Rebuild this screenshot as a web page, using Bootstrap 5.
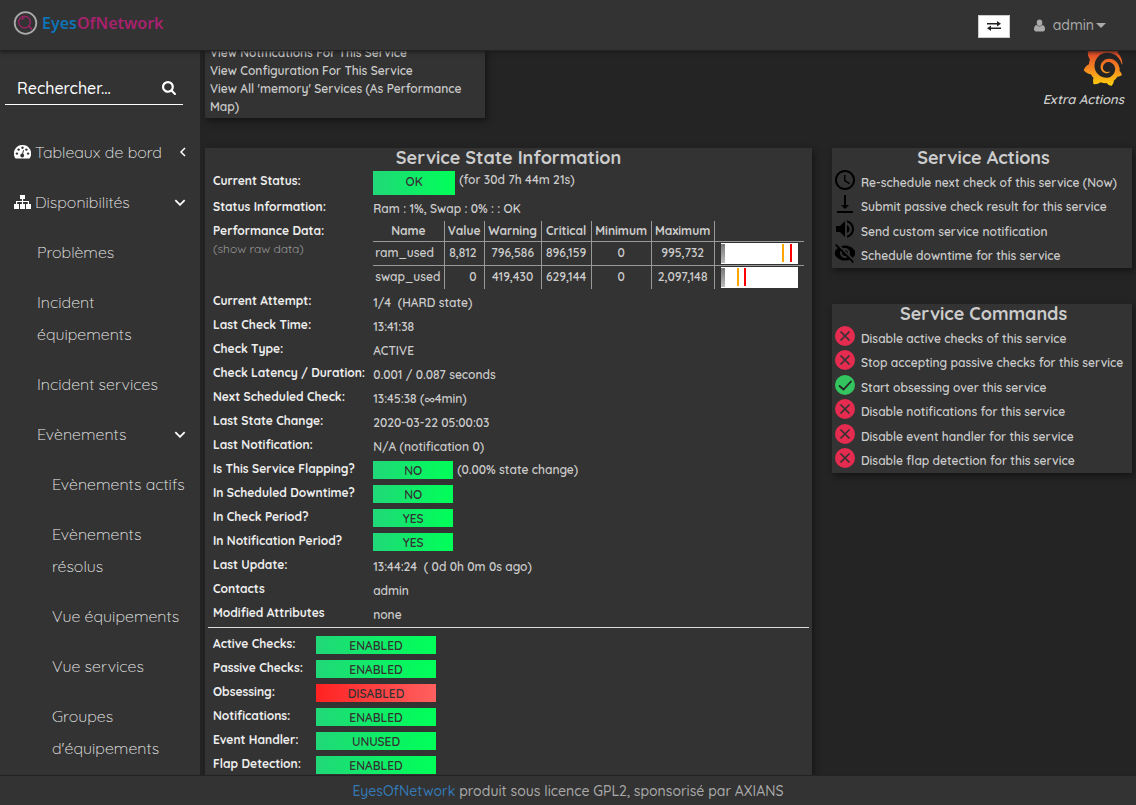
<!DOCTYPE html>
<html lang="fr">
<head>
<meta charset="utf-8">
<meta name="viewport" content="width=device-width, initial-scale=1">
<title>EyesOfNetwork</title>
<link href="https://cdn.jsdelivr.net/npm/bootstrap@5.3.0/dist/css/bootstrap.min.css" rel="stylesheet">
<style>
  body { background: #242424; color: #ccc; font-family: Quicksand, Lato, sans-serif; font-size: 12px; font-weight: 600; line-height: 18px; }
  a { color: inherit; text-decoration: none; }
  .topbar { height: 51px; background: #333; border-bottom: 1px solid #222; box-shadow: 0 1px 4px #1a1a1a; z-index: 2; padding: 0 30px 0 13px; }
  .brand { color: #a8216f; font: 600 16px "Noto Sans", sans-serif; }
  .brand b { color: #0d74b8; font-weight: 600; }
  .swap-btn { width: 32px; height: 23px; margin-top: 2px; background: #fff; border: 1px solid #ccc; color: #222; }
  .user-btn { color: #aaa; font-size: 14px; font-weight: 500; line-height: 20px; }
  .user-btn::after { margin-left: 2px; border-width: 5px 5px 0; }
  .sidebar { width: 200px; background: #333; font-size: 16px; line-height: 32px; color: #eee; font-weight: 300; }
  .search { margin: 20px 17px 18px 5px; height: 34px; border-bottom: 1px solid #fff; padding: 0 7px 0 12px; }
  .search input { width: 100%; min-width: 0; color: #fff; font-weight: 500; }
  .search input::placeholder { color: #fff; opacity: 1; }
  .menu a { display: flex; align-items: center; padding: 9px 14px; color: #eee; }
  .menu .sub a { padding-left: 37px; }
  .menu .sub .sub a { padding-left: 52px; }
  .content { padding: 0 4px 0 5px; }
  /* the page is scrolled a little under the top bar */
  .scrolled { margin-top: -7px; }
  .panel { background: #333; box-shadow: 2px 3px 6px #151515; }
  .links-panel { width: 280px; padding: 0 5px 2px; }
  .columns { margin-top: 30px; }
  .side-col { width: 300px; }
  h2 { margin: 0; padding-bottom: 1px; font-size: 18px; line-height: 20px; font-weight: 700; text-align: center; }
  .facts th { vertical-align: top; padding: 3px 8px 0; height: 24px; color: #eee; font-weight: 700; white-space: nowrap; }
  .facts td { vertical-align: top; padding: 5px 0 0; }
  .facts .first th { height: 26px; }
  .facts .first td { padding-top: 2px; }
  .facts .tagged td { padding-top: 4px; }
  .facts td.flush { padding-top: 2px; }
  .c-wide { width: 168px; }
  .c-flags { width: 111px; }
  .tag { width: 80px; color: #333; line-height: 19px; height: 18px; text-align: center; background: linear-gradient(90deg, #20d878, #00ff58); }
  .tag-lg { width: 82px; height: 24px; line-height: 22px; }
  .tag-flag { width: 120px; }
  .tag-off { background: linear-gradient(90deg, #ff2222, #ff6060); }
  .rule { margin: 2px 3px 4px; border-top: 1px solid #ddd; opacity: 1; }
  .raw { color: #999; font-weight: 400; }
  .perf { border-collapse: collapse; table-layout: fixed; width: 431px; }
  .facts .perf th, .facts .perf td { padding: 0 2px; vertical-align: middle; text-align: center; border: 1px solid #999; }
  .facts .perf tr > :first-child { border-left: 0; }
  .facts .perf tr > :last-child { border-right: 0; }
  .facts .perf tr:first-child > * { border-top: 0; }
  .facts .perf tr:last-child > * { border-bottom: 0; }
  .facts .perf th { height: 20px; color: #ccc; padding: 0; }
  .facts .perf td { height: 24px; }
  .facts .perf .name { text-align: left; }
  .facts .perf .val { text-align: right; padding-right: 7px; }
  .perf svg { display: block; margin-left: 4px; }
  .acts { padding: 0 0 1px 3px; }
  .acts a { display: flex; height: 24px; gap: 6px; align-items: flex-start; white-space: nowrap; }
  .acts a:nth-of-type(even) { height: 25px; }
  .acts span { padding-top: 5px; }
  .cmds { margin-top: 36px; }
  .extra { padding-right: 8px; font-size: 13px; font-style: italic; }
  .footer { height: 30px; background: #333; border-top: 1px solid #222; font-size: 14px; font-weight: 500; color: #aaa; z-index: 2; }
  .footer a { color: #337ab7; }
</style>
</head>
<body class="vh-100 overflow-hidden d-flex flex-column">
<svg width="0" height="0" class="position-absolute">
  <defs>
    <symbol id="down" viewBox="0 0 10 6"><path d="M1 1l4 4 4-4" fill="none" stroke="#fff" stroke-width="1.5"/></symbol>
    <symbol id="no" viewBox="0 0 20 20"><circle cx="10" cy="10" r="10" fill="#e52b50"/><path d="M5.500 5.500l9 9M14.500 5.500l-9 9" stroke="#333" stroke-width="1.700"/></symbol>
    <symbol id="yes" viewBox="0 0 20 20"><circle cx="10" cy="10" r="10" fill="#34c45f"/><path d="M4 10.500l4.500 4L16.500 6" fill="none" stroke="#222" stroke-width="1.800"/></symbol>
    <linearGradient id="sun" x1="0" y1="1" x2="0" y2="0"><stop offset="0" stop-color="#fdd20a"/><stop offset=".3" stop-color="#f99b1c"/><stop offset=".75" stop-color="#e5502a"/><stop offset="1" stop-color="#e5502a"/></linearGradient>
    <linearGradient id="steel" x1="0" y1="0" x2="0" y2="1"><stop offset="0" stop-color="#777"/><stop offset="1" stop-color="#bbb"/></linearGradient>
  </defs>
</svg>

<header class="topbar d-flex align-items-center flex-shrink-0 position-relative">
  <a href="#" class="brand d-flex align-items-center gap-1 me-auto pb-1">
    <svg width="25" height="24" viewBox="0 0 24 24" fill="none"><circle cx="12" cy="12" r="10.800" stroke="#aaa" stroke-width="1.800"/><circle cx="11" cy="11" r="5.800" stroke="#a8216f" stroke-width="1.200"/><path d="M15.500 15l3 3.500M8 8.500a4 4 0 0 1 3-1.300" stroke="#a8216f" stroke-width="1.500"/></svg>
    <span><b>Eyes</b>OfNetwork</span>
  </a>
  <button type="button" class="swap-btn p-0 d-flex align-items-center justify-content-center" aria-label="Basculer"><svg width="14" height="10" viewBox="0 0 14 10" fill="currentColor"><path d="M0 2h10V0l4 2.800-4 2.700V3.500H0zM14 6.500H4v-2L0 7.300 4 10V8h10z"/></svg></button>
  <button type="button" class="user-btn dropdown-toggle border-0 bg-transparent p-0 ms-4 d-flex align-items-center"><svg width="11" height="13" viewBox="0 0 12 13" fill="currentColor" class="me-2"><ellipse cx="6" cy="3.500" rx="3" ry="3.500"/><path d="M2.800 6C.8 6.300 0 8.500 0 10.700 0 12.200 1 13 2 13h8c1 0 2-.8 2-2.300C12 8.500 11.200 6.300 9.200 6 7.500 8 4.500 8 2.800 6z"/></svg>admin</button>
</header>

<div class="d-flex flex-grow-1 overflow-hidden">
  <aside class="sidebar flex-shrink-0">
    <form class="search d-flex align-items-center">
      <input type="text" class="bg-transparent border-0 p-0" placeholder="Rechercher..." aria-label="Rechercher">
      <button type="button" class="bg-transparent border-0 p-0 d-flex" aria-label="Lancer la recherche"><svg width="14" height="14" viewBox="64 128 1664 1664" fill="#fff"><path d="M1216 832q0-185-131.500-316.500t-316.500-131.500-316.500 131.500-131.500 316.500 131.500 316.500 316.500 131.500 316.500-131.500 131.500-316.500zm512 832q0 52-38 90t-90 38q-54 0-90-38l-343-342q-179 124-399 124-143 0-273.500-55.500t-225-150-150-225-55.500-273.500 55.500-273.500 150-225 225-150 273.500-55.500 273.500 55.500 225 150 150 225 55.500 273.500q0 220-124 399l343 343q37 37 37 90z"/></svg></button>
    </form>
    <nav class="menu pt-1">
      <a href="#"><svg class="me-1" width="17" height="14" viewBox="0 0 17 14"><path d="M8.500 0A8.500 8.500 0 0 0 1.200 13q.3.500.8.500h13q.5 0 .8-.5A8.500 8.500 0 0 0 8.500 0z" fill="#fff"/><g fill="#333"><circle cx="2.900" cy="8.600" r="1.200"/><circle cx="4.600" cy="4.600" r="1.200"/><circle cx="8.500" cy="2.800" r="1.200"/><circle cx="12.400" cy="4.600" r="1.200"/><circle cx="14.100" cy="8.600" r="1.200"/><circle cx="8.200" cy="10.500" r="1.900"/><path d="M7.800 10l1.300-5 .9.300-1.200 5z"/></g></svg><span class="me-auto">Tableaux de bord</span><svg width="7" height="10" viewBox="0 0 7 10"><path d="M6 1L2 5l4 4" fill="none" stroke="#fff" stroke-width="1.500"/></svg></a>
      <a href="#"><svg class="me-1" width="17" height="14" viewBox="0 0 17 14" fill="#fff"><path d="M6 0h5v4H9.100v2H15v3h2v5h-5V9h1.800V7H9.100v2H11v5H6V9h1.900V7H3.200v2H5v5H0V9h2V6h5.900V4H6z"/></svg><span class="me-auto">Disponibilités</span><svg width="12" height="7"><use href="#down"/></svg></a>
      <div class="sub">
        <a href="#">Problèmes</a>
        <a href="#">Incident<br>équipements</a>
        <a href="#">Incident services</a>
        <a href="#"><span class="me-auto">Evènements</span><svg width="12" height="7"><use href="#down"/></svg></a>
        <div class="sub">
          <a href="#">Evènements actifs</a>
          <a href="#">Evènements<br>résolus</a>
          <a href="#">Vue équipements</a>
          <a href="#">Vue services</a>
          <a href="#">Groupes<br>d'équipements</a>
        </div>
      </div>
    </nav>
  </aside>

  <main class="content flex-grow-1 overflow-hidden">
    <div class="scrolled d-flex justify-content-between">
      <div class="panel links-panel">
        <a href="#" class="d-block">View Notifications For This Service</a>
        <a href="#" class="d-block">View Configuration For This Service</a>
        <a href="#" class="d-block">View All 'memory' Services (As Performance Map)</a>
      </div>
      <a href="#" class="extra d-flex flex-column align-items-end">
        <svg width="42" height="42" viewBox="0 0 24 24" class="mb-1"><path fill="url(#sun)" d="M23.020 10.590a8.578 8.578 0 0 0-.862-3.034 8.911 8.911 0 0 0-1.789-2.445c.337-1.342-.413-2.505-.413-2.505-1.292-.08-2.113.4-2.416.62-.052-.02-.102-.044-.154-.064-.22-.089-.446-.172-.677-.247-.231-.073-.47-.14-.711-.197a9.867 9.867 0 0 0-.875-.161C14.557.753 12.940 0 12.940 0c-1.804 1.145-2.147 2.744-2.147 2.744l-.018.093c-.098.029-.2.057-.298.088-.138.042-.275.094-.413.143-.138.055-.275.107-.41.166a8.869 8.869 0 0 0-1.557.87l-.063-.029c-2.497-.955-4.716.195-4.716.195-.203 2.658.996 4.330 1.235 4.636a11.608 11.608 0 0 0-.607 2.635C1.636 12.677.953 15.014.953 15.014c1.926 2.214 4.171 2.351 4.171 2.351.003-.002.006-.002.006-.005.285.509.615.994.986 1.446.156.19.32.371.488.548-.704 2.009.099 3.680.099 3.680 2.144.08 3.553-.937 3.849-1.173a9.784 9.784 0 0 0 3.164.501h.08l.055-.003.107-.002.103-.005.003.002c1.010 1.440 2.788 1.646 2.788 1.646 1.264-1.332 1.337-2.653 1.337-2.940v-.058c0-.02-.003-.039-.003-.06.265-.187.52-.387.758-.6a7.875 7.875 0 0 0 1.415-1.700c1.430.083 2.437-.885 2.437-.885-.236-1.490-1.085-2.216-1.264-2.354l-.018-.013-.016-.013a.217.217 0 0 1-.031-.02c.008-.092.016-.18.02-.27.011-.162.016-.323.016-.48v-.253l-.005-.098-.008-.135a1.891 1.891 0 0 0-.01-.13c-.003-.042-.008-.083-.013-.125l-.016-.124-.018-.122a6.215 6.215 0 0 0-2.032-3.730 6.015 6.015 0 0 0-3.222-1.460 6.292 6.292 0 0 0-.85-.048l-.107.002h-.063l-.044.003-.104.008a4.777 4.777 0 0 0-3.335 1.695c-.332.4-.592.84-.768 1.297a4.594 4.594 0 0 0-.312 1.817l.003.091c.005.055.007.11.013.164a3.615 3.615 0 0 0 .698 1.820 3.530 3.530 0 0 0 1.827 1.282c.33.098.66.14.971.137.039 0 .078 0 .114-.002l.063-.003c.02 0 .041-.003.062-.003.034-.002.065-.007.099-.01.007 0 .018-.003.028-.003l.031-.005.06-.008a1.180 1.180 0 0 0 .112-.02c.036-.008.072-.013.109-.024a2.634 2.634 0 0 0 .914-.415c.028-.02.056-.041.085-.065a.248.248 0 0 0 .039-.35.244.244 0 0 0-.309-.06l-.078.042c-.09.044-.184.083-.283.116a2.476 2.476 0 0 1-.475.096c-.028.003-.054.006-.083.006l-.083.002c-.026 0-.054 0-.08-.002l-.102-.006h-.012l-.024.006c-.016-.003-.031-.003-.044-.006-.031-.002-.06-.007-.091-.01a2.590 2.590 0 0 1-.724-.213 2.557 2.557 0 0 1-.667-.438 2.520 2.520 0 0 1-.805-1.475 2.306 2.306 0 0 1-.029-.444l.006-.122v-.023l.002-.031c.003-.021.003-.04.005-.06a3.163 3.163 0 0 1 1.352-2.290 3.120 3.120 0 0 1 .937-.43 2.946 2.946 0 0 1 .776-.101h.06l.07.002.045.003h.026l.07.005a4.041 4.041 0 0 1 1.635.49 3.940 3.940 0 0 1 1.602 1.662 3.770 3.770 0 0 1 .397 1.414l.005.076.003.075c.002.026.002.05.002.075 0 .024.003.052 0 .07v.065l-.002.073-.008.174a6.195 6.195 0 0 1-.08.639 5.100 5.100 0 0 1-.267.927 5.310 5.310 0 0 1-.624 1.130 5.052 5.052 0 0 1-3.237 2.014 4.820 4.820 0 0 1-.649.066l-.039.003h-.287a6.607 6.607 0 0 1-1.716-.265 6.776 6.776 0 0 1-3.400-2.274 6.750 6.750 0 0 1-.746-1.150 6.616 6.616 0 0 1-.714-2.596l-.005-.083-.002-.02v-.056l-.003-.073v-.096l-.003-.104v-.07l.003-.163c.008-.22.026-.45.054-.678a8.707 8.707 0 0 1 .28-1.355c.128-.444.286-.872.473-1.277a7.040 7.040 0 0 1 1.456-2.100 5.925 5.925 0 0 1 .953-.763c.169-.111.343-.213.524-.306.089-.05.182-.091.273-.135.047-.02.093-.042.138-.062a7.177 7.177 0 0 1 .714-.267l.145-.045c.049-.015.098-.026.148-.041.098-.029.197-.052.296-.076.049-.013.1-.02.15-.033l.15-.032.151-.028.076-.013.075-.01.153-.024c.057-.01.114-.013.171-.023l.169-.021c.036-.003.073-.008.106-.01l.073-.008.036-.003.042-.002c.057-.003.114-.008.171-.01l.086-.006h.023l.037-.003.145-.007a7.999 7.999 0 0 1 1.708.125 7.917 7.917 0 0 1 2.048.68 8.253 8.253 0 0 1 1.672 1.090l.09.077.089.078c.06.052.114.107.171.159.057.052.112.106.166.16.052.055.107.107.159.164a8.671 8.671 0 0 1 1.410 1.978c.012.026.028.052.04.078l.04.078.075.156c.023.051.05.1.07.153l.065.15a8.848 8.848 0 0 1 .45 1.340.19.19 0 0 0 .201.142.186.186 0 0 0 .172-.184c.01-.246.002-.532-.024-.856z"/></svg>
        <span>Extra Actions</span>
      </a>
    </div>

    <div class="columns d-flex align-items-start">
      <section class="panel flex-grow-1 me-3">
        <h2>Service State Information</h2>
        <table class="facts w-100">
          <colgroup><col class="c-wide"><col></colgroup>
          <tr class="first"><th scope="row">Current Status:</th><td><div class="d-flex gap-1"><div class="tag tag-lg">OK</div><span>(for 30d 7h 44m 21s)</span></div></td></tr>
          <tr><th scope="row">Status Information:</th><td>Ram : 1%, Swap : 0% : : OK</td></tr>
          <tr><th scope="row">Performance Data:<br><a href="#" class="raw">(show raw data)</a></th><td class="flush">
            <table class="perf">
              <colgroup><col width="71"><col width="40"><col width="57"><col width="50"><col width="60"><col width="63"><col></colgroup>
              <tr><th>Name</th><th>Value</th><th>Warning</th><th>Critical</th><th>Minimum</th><th>Maximum</th><th></th></tr>
              <tr><td class="name">ram_used</td><td class="val">8,812</td><td>796,586</td><td>896,159</td><td>0</td><td>995,732</td><td><svg width="77" height="21"><path fill="#fff" d="M0 0h77v21H0z"/><path fill="url(#steel)" d="M0 1h4v19H0z"/><path fill="orange" d="M61 1h2v18h-2z"/><path fill="red" d="M69 1h2v18h-2z"/></svg></td></tr>
              <tr><td class="name">swap_used</td><td class="val">0</td><td>419,430</td><td>629,144</td><td>0</td><td>2,097,148</td><td><svg width="77" height="21"><path fill="#fff" d="M0 0h77v21H0z"/><path fill="url(#steel)" d="M0 1h4v19H0z"/><path fill="orange" d="M16 1h2v18h-2z"/><path fill="red" d="M23 1h2v18h-2z"/></svg></td></tr>
            </table></td></tr>
          <tr><th scope="row">Current Attempt:</th><td>1/4 &nbsp;(HARD state)</td></tr>
          <tr><th scope="row">Last Check Time:</th><td>13:41:38</td></tr>
          <tr><th scope="row">Check Type:</th><td>ACTIVE</td></tr>
          <tr><th scope="row">Check Latency / Duration:</th><td>0.001 / 0.087 seconds</td></tr>
          <tr><th scope="row">Next Scheduled Check:</th><td>13:45:38 (∞4min)</td></tr>
          <tr><th scope="row">Last State Change:</th><td>2020-03-22 05:00:03</td></tr>
          <tr><th scope="row">Last Notification:</th><td>N/A (notification 0)</td></tr>
          <tr class="tagged"><th scope="row">Is This Service Flapping?</th><td><div class="d-flex gap-1"><div class="tag">NO</div><span>(0.00% state change)</span></div></td></tr>
          <tr class="tagged"><th scope="row">In Scheduled Downtime?</th><td><div class="tag">NO</div></td></tr>
          <tr class="tagged"><th scope="row">In Check Period?</th><td><div class="tag">YES</div></td></tr>
          <tr class="tagged"><th scope="row">In Notification Period?</th><td><div class="tag">YES</div></td></tr>
          <tr><th scope="row">Last Update:</th><td>13:44:24 &nbsp;( 0d 0h 0m 0s ago)</td></tr>
          <tr><th scope="row">Contacts</th><td>admin</td></tr>
          <tr><th scope="row">Modified Attributes</th><td>none</td></tr>
        </table>
        <hr class="rule">
        <table class="facts w-100">
          <colgroup><col class="c-flags"><col></colgroup>
          <tr class="tagged"><th scope="row">Active Checks:</th><td><div class="tag tag-flag">ENABLED</div></td></tr>
          <tr class="tagged"><th scope="row">Passive Checks:</th><td><div class="tag tag-flag">ENABLED</div></td></tr>
          <tr class="tagged"><th scope="row">Obsessing:</th><td><div class="tag tag-flag tag-off">DISABLED</div></td></tr>
          <tr class="tagged"><th scope="row">Notifications:</th><td><div class="tag tag-flag">ENABLED</div></td></tr>
          <tr class="tagged"><th scope="row">Event Handler:</th><td><div class="tag tag-flag">UNUSED</div></td></tr>
          <tr class="tagged"><th scope="row">Flap Detection:</th><td><div class="tag tag-flag">ENABLED</div></td></tr>
        </table>
      </section>

      <div class="side-col flex-shrink-0 ms-1">
        <section class="panel acts">
          <h2>Service Actions</h2>
          <a href="#"><svg width="20" height="22" viewBox="2 1 20 22"><path d="M11.990 2C6.470 2 2 6.480 2 12s4.470 10 9.990 10C17.520 22 22 17.520 22 12S17.520 2 11.990 2zM12 20c-4.420 0-8-3.580-8-8s3.580-8 8-8 8 3.580 8 8-3.580 8-8 8zm.5-13H11v6l5.250 3.150.75-1.230-4.500-2.670z"/></svg><span>Re-schedule next check of this service (Now)</span></a>
          <a href="#"><svg width="20" height="22" viewBox="2 1 20 22"><path d="M16 13h-3V3h-2v10H8l4 4 4-4zM4 19v2h16v-2H4z"/></svg><span>Submit passive check result for this service</span></a>
          <a href="#"><svg width="20" height="22" viewBox="2 1 20 22"><path d="M3 9v6h4l5 5V4L7 9H3zm13.500 3c0-1.770-1.020-3.290-2.500-4.030v8.050c1.480-.73 2.500-2.250 2.500-4.020zM14 3.230v2.060c2.890.86 5 3.540 5 6.710s-2.110 5.850-5 6.710v2.060c4.010-.91 7-4.490 7-8.770s-2.990-7.860-7-8.770z"/></svg><span>Send custom service notification</span></a>
          <a href="#"><svg width="20" height="22" viewBox="2 1 20 22"><path d="M12 7c2.760 0 5 2.240 5 5 0 .65-.13 1.260-.36 1.830l2.920 2.920c1.510-1.260 2.700-2.890 3.430-4.750-1.730-4.390-6-7.500-11-7.500-1.400 0-2.740.25-3.980.7l2.160 2.160C10.740 7.130 11.350 7 12 7zM2 4.270l2.280 2.280.46.46C3.080 8.300 1.780 10.020 1 12c1.730 4.390 6 7.500 11 7.500 1.550 0 3.030-.3 4.380-.84l.42.42L19.730 22 21 20.730 3.270 3 2 4.270zM7.530 9.800l1.550 1.550c-.05.21-.08.43-.08.65 0 1.660 1.340 3 3 3 .22 0 .44-.03.65-.08l1.550 1.550c-.67.33-1.410.53-2.200.53-2.760 0-5-2.240-5-5 0-.79.2-1.530.53-2.200zm4.310-.78l3.150 3.150.02-.16c0-1.660-1.340-3-3-3l-.17.01z"/></svg><span>Schedule downtime for this service</span></a>
        </section>
        <section class="panel acts cmds">
          <h2>Service Commands</h2>
          <a href="#"><svg width="20" height="22"><use href="#no"/></svg><span>Disable active checks of this service</span></a>
          <a href="#"><svg width="20" height="22"><use href="#no"/></svg><span>Stop accepting passive checks for this service</span></a>
          <a href="#"><svg width="20" height="22"><use href="#yes"/></svg><span>Start obsessing over this service</span></a>
          <a href="#"><svg width="20" height="22"><use href="#no"/></svg><span>Disable notifications for this service</span></a>
          <a href="#"><svg width="20" height="22"><use href="#no"/></svg><span>Disable event handler for this service</span></a>
          <a href="#"><svg width="20" height="22"><use href="#no"/></svg><span>Disable flap detection for this service</span></a>
        </section>
      </div>
    </div>
  </main>
</div>

<footer class="footer d-flex align-items-center justify-content-center flex-shrink-0 position-relative"><span><a href="#">EyesOfNetwork</a> produit sous licence GPL2, sponsorisé par AXIANS</span></footer>
<script src="https://cdn.jsdelivr.net/npm/bootstrap@5.3.0/dist/js/bootstrap.bundle.min.js"></script>
</body>
</html>
